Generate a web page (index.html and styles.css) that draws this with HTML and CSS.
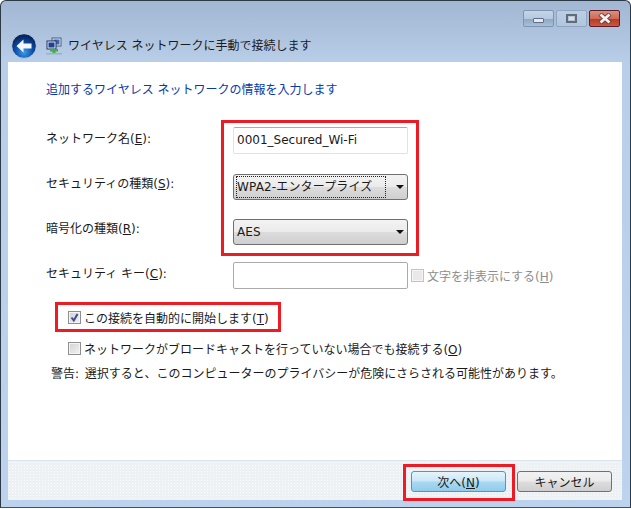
FILE: index.html
```html
<!DOCTYPE html>
<html lang="ja">
<head>
  <meta charset="UTF-8" />
  <title>ワイヤレス ネットワークに手動で接続します</title>
  <link rel="stylesheet" href="styles.css">
</head>
<body>
  <div class="window">

    <!-- caption + nav -->
    <header class="titlebar">
      <div class="caption-buttons">
        <div class="cap-btn"><span class="min-glyph"></span></div>
        <div class="cap-btn cap-max"><span class="max-glyph"></span></div>
        <div class="cap-btn cap-close">
          <svg width="14" height="11" viewBox="0 0 14 11"><path d="M2 1 L12 10 M12 1 L2 10" stroke="#6b3a3a" stroke-width="4.4"/><path d="M2.5 1.5 L11.5 9.5 M11.5 1.5 L2.5 9.5" stroke="#f2f2f2" stroke-width="2.8"/></svg>
        </div>
      </div>
      <div class="navbar">
        <svg class="back-btn" width="26" height="26" viewBox="0 0 26 26">
          <defs>
            <radialGradient id="backFill" cx="50%" cy="75%" r="65%">
              <stop offset="0" stop-color="#3f9be8"/>
              <stop offset="0.55" stop-color="#0c4fa8"/>
              <stop offset="1" stop-color="#07255f"/>
            </radialGradient>
          </defs>
          <circle cx="13" cy="13" r="12.3" fill="url(#backFill)" stroke="#c9d7e8" stroke-width="0.8"/>
          <path d="M5.5 13 L12.5 6.5 L12.5 10.5 L20.5 10.5 L20.5 15.5 L12.5 15.5 L12.5 19.5 Z" fill="#f4f8fc"/>
        </svg>
        <svg class="net-icon" width="16" height="18" viewBox="0 0 16 18">
          <rect x="6" y="1" width="9" height="8" fill="#dfe8f4" stroke="#4a5f86"/>
          <rect x="7.5" y="2.5" width="6" height="5" fill="#3a68b5"/>
          <rect x="1" y="4" width="9" height="8" fill="#dfe8f4" stroke="#27375c"/>
          <rect x="2.5" y="5.5" width="6" height="5" fill="#1f3f8f"/>
          <rect x="4" y="12" width="8" height="2.5" fill="#3fae49"/>
          <rect x="6.5" y="12" width="3" height="4" fill="#3fae49"/>
          <rect x="0" y="16" width="16" height="1.5" fill="#9db0c4"/>
        </svg>
        <span class="win-title">ワイヤレス ネットワークに手動で接続します</span>
      </div>
    </header>

    <div class="client">
      <main class="content">
        <h1 class="heading">追加するワイヤレス ネットワークの情報を入力します</h1>

        <div class="form-grid">
          <label class="field-label">ネットワーク名(<u>E</u>):</label>
          <input class="text-input" type="text" value="0001_Secured_Wi-Fi" />

          <label class="field-label combo-label">セキュリティの種類(<u>S</u>):</label>
          <div class="combo">
            <span class="combo-value focused">WPA2-エンタープライズ</span>
            <span class="combo-arrow"></span>
          </div>

          <label class="field-label combo-label">暗号化の種類(<u>R</u>):</label>
          <div class="combo">
            <span class="combo-value">AES</span>
            <span class="combo-arrow"></span>
          </div>

          <label class="field-label">セキュリティ キー(<u>C</u>):</label>
          <div class="key-row">
            <input class="text-input key-input" type="text" />
            <span class="check-box disabled"></span>
            <span class="disabled-text">文字を非表示にする(<u>H</u>)</span>
          </div>
        </div>

        <div class="check-row first">
          <span class="check-box">
            <svg width="11" height="11" viewBox="0 0 11 11"><path d="M2.5 5.5 L4.8 8.5 L8.5 2" fill="none" stroke="#3c4f8c" stroke-width="2"/></svg>
          </span>
          <span>この接続を自動的に開始します(<u>T</u>)</span>
        </div>
        <div class="check-row second">
          <span class="check-box"></span>
          <span>ネットワークがブロードキャストを行っていない場合でも接続する(<u>O</u>)</span>
        </div>
        <p class="warning">警告: 選択すると、このコンピューターのプライバシーが危険にさらされる可能性があります。</p>
      </main>

      <footer class="footer">
        <button class="btn btn-default" type="button">次へ(<u>N</u>)</button>
        <button class="btn" type="button">キャンセル</button>
      </footer>
    </div>

    <!-- red annotation boxes -->
    <div class="mark mark-form"></div>
    <div class="mark mark-auto"></div>
    <div class="mark mark-next"></div>
  </div>
</body>
</html>
```

FILE: styles.css
```css
* { margin: 0; padding: 0; box-sizing: border-box; }

body {
  width: 631px;
  height: 509px;
  overflow: hidden;
  background: #fff;
  font-family: "DejaVu Sans", "Noto Sans CJK JP", sans-serif;
  font-size: 12px;
  color: #1a1a1a;
}

.window {
  position: relative;
  width: 631px;
  height: 508px;
  display: flex;
  flex-direction: column;
  padding: 0 8px 7px 7px;
  background: linear-gradient(#a2b7d1, #b0c6e0 40px, #b9cfe9 62px, #bdd2ec);
  border: 1px solid #2c3a48;
  border-bottom-color: #1c5f80;
  border-radius: 6px 6px 0 0;
}

/* title bar */
.titlebar {
  height: 61px;
  flex-shrink: 0;
}

.caption-buttons {
  display: flex;
  justify-content: flex-end;
  gap: 2px;
  padding-top: 9px;
  padding-right: 2px;
}

.cap-btn {
  width: 31px;
  height: 17px;
  display: flex;
  align-items: center;
  justify-content: center;
  border: 1px solid #7f94ae;
  border-radius: 2px;
  background: linear-gradient(#c5d5e8, #b5c9df 50%, #8fa8c4 55%, #a9c0da);
}

.cap-max { border-color: #90a5bf; background: linear-gradient(#bccee4, #b1c6de); }

.cap-close {
  border-color: #5c1c2c;
  background: linear-gradient(#dc9080, #cf6a55 50%, #b93a28 55%, #c9573f);
}

.min-glyph {
  width: 11px;
  height: 5px;
  margin-top: 3px;
  background: #e8e8ee;
  border: 1px solid #5f6f88;
  border-radius: 1px;
}

.max-glyph {
  width: 11px;
  height: 9px;
  background: #dcdde2;
  border: 2px solid #5f6c80;
  box-shadow: inset 0 0 0 1px #b9c4d2;
}

.navbar {
  display: flex;
  align-items: center;
  height: 26px;
  margin-top: 6px;
  padding-left: 3px;
}

.back-btn { flex-shrink: 0; }
.net-icon { flex-shrink: 0; margin-left: 9px; }
.win-title { margin-left: 6px; line-height: 26px; color: #1b1b22; white-space: nowrap; }

/* client area */
.client {
  flex: 1;
  display: flex;
  flex-direction: column;
  background: #fff;
}

.content {
  flex: 1;
  padding: 19px 0 0 38px;
}

.heading {
  font-size: 12px;
  font-weight: normal;
  line-height: 18px;
  color: #0a3aa8;
  white-space: nowrap;
}

.form-grid {
  display: grid;
  grid-template-columns: 187px 175px;
  grid-template-rows: 47px 45px 43px 27px;
  margin-top: 28px;
  align-items: start;
}

.form-grid .field-label { white-space: nowrap; line-height: 24px; }
.form-grid .combo-label { line-height: 21px; }

.text-input {
  width: 175px;
  height: 27px;
  padding: 0 3px 2px;
  font: inherit;
  color: #1a1a1a;
  background: #fff;
  border: 1px solid #dbe3ec;
  border-top-color: #ababab;
  border-radius: 2px;
  outline: none;
}

.key-row {
  display: flex;
  align-items: center;
  white-space: nowrap;
}

.key-input {
  flex-shrink: 0;
  border-color: #ababab;
}

.key-row .check-box { margin-left: 3px; }

.disabled-text {
  margin-left: 3px;
  color: #8d8d8d;
}

.combo {
  display: flex;
  align-items: center;
  height: 26px;
  padding: 2px 3px;
  border: 1px solid #707070;
  border-radius: 3px;
  background: linear-gradient(#f3f3f3, #ebebeb 48%, #dcdcdc 52%, #cfcfcf);
}

.combo-value {
  width: 152px;
  height: 20px;
  line-height: 20px;
  letter-spacing: 0.15px;
  white-space: nowrap;
}

.combo-value.focused { outline: 1px dotted #222; }

.combo-arrow {
  width: 0;
  height: 0;
  margin-left: 11px;
  border-left: 4px solid transparent;
  border-right: 4px solid transparent;
  border-top: 4px solid #111;
}

/* checkboxes */
.check-box {
  width: 13px;
  height: 13px;
  flex-shrink: 0;
  display: inline-flex;
  align-items: center;
  justify-content: center;
  border: 1px solid #8e8f8f;
  background: linear-gradient(135deg, #d2d3d6, #f2f2f4);
  box-shadow: inset 0 0 0 1px #f4f4f4;
}

.check-box.disabled { background: #e9e9ea; border-color: #c4c4c4; }

.check-row {
  display: flex;
  align-items: center;
  gap: 3px;
  padding-left: 22px;
  height: 20px;
  white-space: nowrap;
}

.check-row.first { margin-top: 18px; }
.check-row.second { margin-top: 11px; }

.warning {
  margin: 6px 0 0 5px;
  line-height: 20px;
  word-spacing: 2px;
  white-space: nowrap;
}

/* footer */
.footer {
  height: 40px;
  flex-shrink: 0;
  display: flex;
  justify-content: flex-end;
  align-items: flex-start;
  gap: 11px;
  padding: 10px 10px 0 0;
  border-top: 1px solid #dbe5ef;
  background-color: #eef1f4;
  background-image: radial-gradient(#fafbfc 0.8px, transparent 1px);
  background-size: 3px 3px;
}

.btn {
  width: 95px;
  height: 21px;
  font: inherit;
  color: #1a1a1a;
  border: 1px solid #707070;
  border-radius: 3px;
  background: linear-gradient(#f2f2f2, #ebebeb 48%, #dddddd 52%, #cfcfcf);
}

.btn-default {
  border-color: #3c9ed0;
  background: linear-gradient(#e6f3fb, #cbe6f7 48%, #a9d9f2 52%, #92cbeb);
}

/* annotation boxes */
.mark {
  position: absolute;
  border: 3px solid #ed1c24;
}

.mark-form { left: 220px; top: 119px; width: 198px; height: 136px; }
.mark-auto { left: 54px; top: 301px; width: 226px; height: 30px; }
.mark-next { left: 402px; top: 463px; width: 112px; height: 37px; }
```
